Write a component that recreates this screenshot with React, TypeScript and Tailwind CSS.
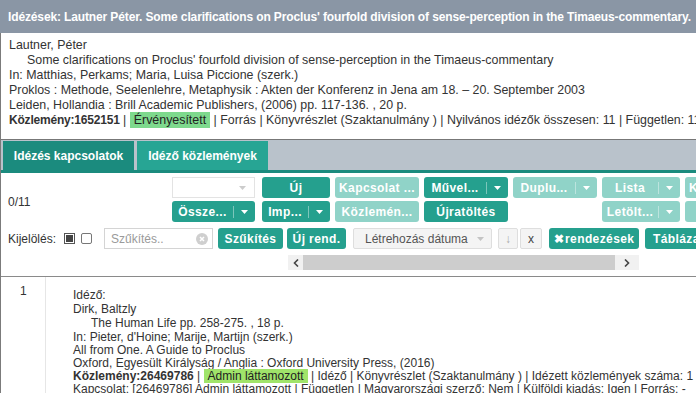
import React from "react";

const teal = "bg-[#25a08e]";
const tealOff = "bg-[#90d3c8]";

function Caret({ className = "" }: { className?: string }) {
  return (
    <svg width="7" height="4" viewBox="0 0 7 4" className={className}>
      <path d="M0 0h7L3.5 4z" fill="currentColor" />
    </svg>
  );
}

function Btn({ label, off, split }: { label: string; off?: boolean; split?: boolean }) {
  const bg = off ? tealOff : teal;
  if (split) {
    return (
      <div className={`flex h-[21px] items-center rounded-[3px] ${bg} text-white text-[12px] font-bold tracking-[0.4px] whitespace-nowrap overflow-hidden`}>
        <span className="flex-1 text-center">{label}</span>
        <span className="w-px h-[12px] bg-white/40" />
        <span className="w-[21px] flex justify-center">
          <Caret />
        </span>
      </div>
    );
  }
  return (
    <div className={`flex h-[21px] items-center justify-center rounded-[3px] ${bg} text-white text-[12px] font-bold tracking-[0.4px] whitespace-nowrap overflow-hidden`}>
      {label}
    </div>
  );
}

export default function App() {
  return (
    <div className="w-[696px] h-[393px] overflow-hidden bg-white font-['Liberation_Sans',Arial,sans-serif] text-[12px] text-[#333]">
      {/* title bar */}
      <div className="h-[33px] bg-[#8a96a5] px-[8px] flex items-center text-white font-bold tracking-[-0.13px] whitespace-nowrap">
        Idézések: Lautner Péter. Some clarifications on Proclus' fourfold division of sense-perception in the Timaeus-commentary.
      </div>

      <div className="border-l border-[#7b7b7b]">
        {/* publication */}
        <div className="pt-[5px] pb-[11px] px-[8px] leading-[15px] text-[12.4px] whitespace-nowrap">
          <div>Lautner, Péter</div>
          <div className="pl-[18px]">Some clarifications on Proclus' fourfold division of sense-perception in the Timaeus-commentary</div>
          <div>In: Matthias, Perkams; Maria, Luisa Piccione (szerk.)</div>
          <div>Proklos : Methode, Seelenlehre, Metaphysik : Akten der Konferenz in Jena am 18. – 20. September 2003</div>
          <div>Leiden, Hollandia : Brill Academic Publishers, (2006) pp. 117-136. , 20 p.</div>
          <div>
            <b className="text-[12px] tracking-[-0.2px]">Közlemény:1652151</b> | <span className="bg-[#7ed98d] px-[4px] py-[1px] text-[#222]">Érvényesített</span> | Forrás | Könyvrészlet (Szaktanulmány ) | Nyilvános idézők összesen: 11 | Független: 11 | Független
          </div>
        </div>

        {/* tabs */}
        <div className="border-t border-[#777]">
          <div className="h-[30px] bg-[#b9c2cb] flex items-end pl-[2px] gap-[3px]">
            <div className="w-[131px] h-[29px] bg-[#1b8b7e] text-white font-bold flex items-center justify-center">Idézés kapcsolatok</div>
            <div className="w-[131px] h-[29px] bg-[#27a594] text-white font-bold flex items-center justify-center">Idéző közlemények</div>
          </div>
          <div className="h-[3px] bg-[#1b8b7e]" />
        </div>

        {/* toolbar */}
        <div className="pt-[4px] pb-[6px] border-b border-[#8a8a8a] whitespace-nowrap">
          <div className="flex">
            <div className="w-[171px] shrink-0 pl-[7px] pt-[18px] leading-[15px]">0/11</div>
            <div className="grid grid-cols-[85px_68px_84px_84px_84px_78px_84px] gap-x-[5px] gap-y-[3px] shrink-0">
              <div className="w-[83px] h-[21px] border border-[#e3e3e3] bg-white flex items-center justify-end pr-[8px] text-[#ccc]">
                <Caret />
              </div>
              <Btn label="Új" />
              <Btn label="Kapcsolat ..." off />
              <Btn label="Művel..." split />
              <Btn label="Duplu..." off split />
              <Btn label="Lista" off split />
              <div className="h-[21px] rounded-[3px] bg-[#90d3c8] text-white text-[12px] font-bold pl-[4px] flex items-center overflow-hidden">Kapcsolat</div>

              <div className="w-[83px]">
                <Btn label="Össze..." split />
              </div>
              <Btn label="Imp..." split />
              <Btn label="Közlemén..." off />
              <Btn label="Újratöltés" />
              <div />
              <Btn label="Letölt..." off split />
              <Btn label="Másolás" off />
            </div>
          </div>

          {/* filter row */}
          <div className="mt-[6px] flex items-center h-[21px] pl-[7px] *:shrink-0">
            <span className="w-[56px]">Kijelölés:</span>
            <span className="w-[11px] h-[11px] border border-[#555] p-[1px] flex">
              <span className="flex-1 bg-[#444]" />
            </span>
            <span className="ml-[6px] w-[11px] h-[11px] border border-[#777] rounded-[2px] bg-white" />
            <div className="ml-[12px] w-[109px] h-[21px] border border-[#d4d4d4] bg-white flex items-center pl-[6px] pr-[4px] text-[#9a9a9a]">
              <span className="flex-1">Szűkítés..</span>
              <span className="w-[12px] h-[12px] rounded-full bg-[#cfcfcf] flex items-center justify-center">
                <svg width="6" height="6" viewBox="0 0 6 6">
                  <path d="M1 1l4 4M5 1l-4 4" stroke="#fff" strokeWidth="1.5" />
                </svg>
              </span>
            </div>
            <div className="ml-[5px] w-[65px]">
              <Btn label="Szűkítés" />
            </div>
            <div className="ml-[4px] w-[59px]">
              <Btn label="Új rend." />
            </div>
            <div className="ml-[7px] w-[139px] h-[21px] border border-[#dedede] bg-[#f4f4f4] rounded-[2px] flex items-center pl-[11px] pr-[7px] text-[#555]">
              <span className="flex-1">Létrehozás dátuma</span>
              <Caret className="text-[#c4c4c4]" />
            </div>
            <div className="ml-[6px] w-[20px] h-[21px] border border-[#dedede] bg-[#f4f4f4] rounded-[2px] flex items-center justify-center text-[#aaa]">↓</div>
            <div className="ml-[2px] w-[22px] h-[21px] border border-[#dedede] bg-[#f4f4f4] rounded-[2px] flex items-center justify-center text-[#444]">x</div>
            <div className="ml-[7px] w-[90px] h-[21px] rounded-[3px] bg-[#25a08e] text-white text-[12px] font-bold tracking-[0.4px] flex items-center justify-center">
              <span className="mr-[1px]">✖</span>rendezések
            </div>
            <div className="ml-[6px] w-[90px] h-[21px] rounded-[3px] bg-[#25a08e] text-white text-[12px] font-bold tracking-[0.4px] flex items-center pl-[8px]">
              Táblázat
            </div>
          </div>

          {/* scrollbar */}
          <div className="mt-[6px] ml-[287px] w-[351px] h-[15px] flex bg-[#f1f1f1]">
            <div className="w-[15px] flex items-center justify-center">
              <svg width="6" height="8" viewBox="0 0 6 8">
                <path d="M5 0.5L1.5 4L5 7.5" stroke="#444" strokeWidth="1.6" fill="none" />
              </svg>
            </div>
            <div className="w-[312px] bg-[#cdcdcd]" />
            <div className="flex-1 flex items-center justify-center">
              <svg width="6" height="8" viewBox="0 0 6 8">
                <path d="M1 0.5L4.5 4L1 7.5" stroke="#444" strokeWidth="1.6" fill="none" />
              </svg>
            </div>
          </div>
        </div>

        {/* citation row */}
        <div className="flex whitespace-nowrap">
          <div className="w-[45px] shrink-0 border-r border-[#e6e6e6] pl-[19px] pt-[7px] leading-[15px] h-[120px]">1</div>
          <div className="pl-[27px] pt-[11px]">
            <div className="leading-[14px]">
              <div>Idéző:</div>
              <div>Dirk, Baltzly</div>
              <div className="pl-[18px]">The Human Life pp. 258-275. , 18 p.</div>
              <div>In: Pieter, d'Hoine; Marije, Martijn (szerk.)</div>
            </div>
            <div className="leading-[13px]">
              <div>All from One. A Guide to Proclus</div>
              <div>Oxford, Egyesült Királyság / Anglia : Oxford University Press, (2016)</div>
              <div>
                <b>Közlemény:26469786</b> | <span className="bg-[#a0e46a] px-[4px] text-[#222]">Admin láttamozott</span> | Idéző | Könyvrészlet (Szaktanulmány ) | Idézett közlemények száma: 1
              </div>
              <div>Kapcsolat: [26469786] Admin láttamozott | Független | Magyarországi szerző: Nem | Külföldi kiadás: Igen | Forrás: -</div>
            </div>
          </div>
        </div>
      </div>
    </div>
  );
}
